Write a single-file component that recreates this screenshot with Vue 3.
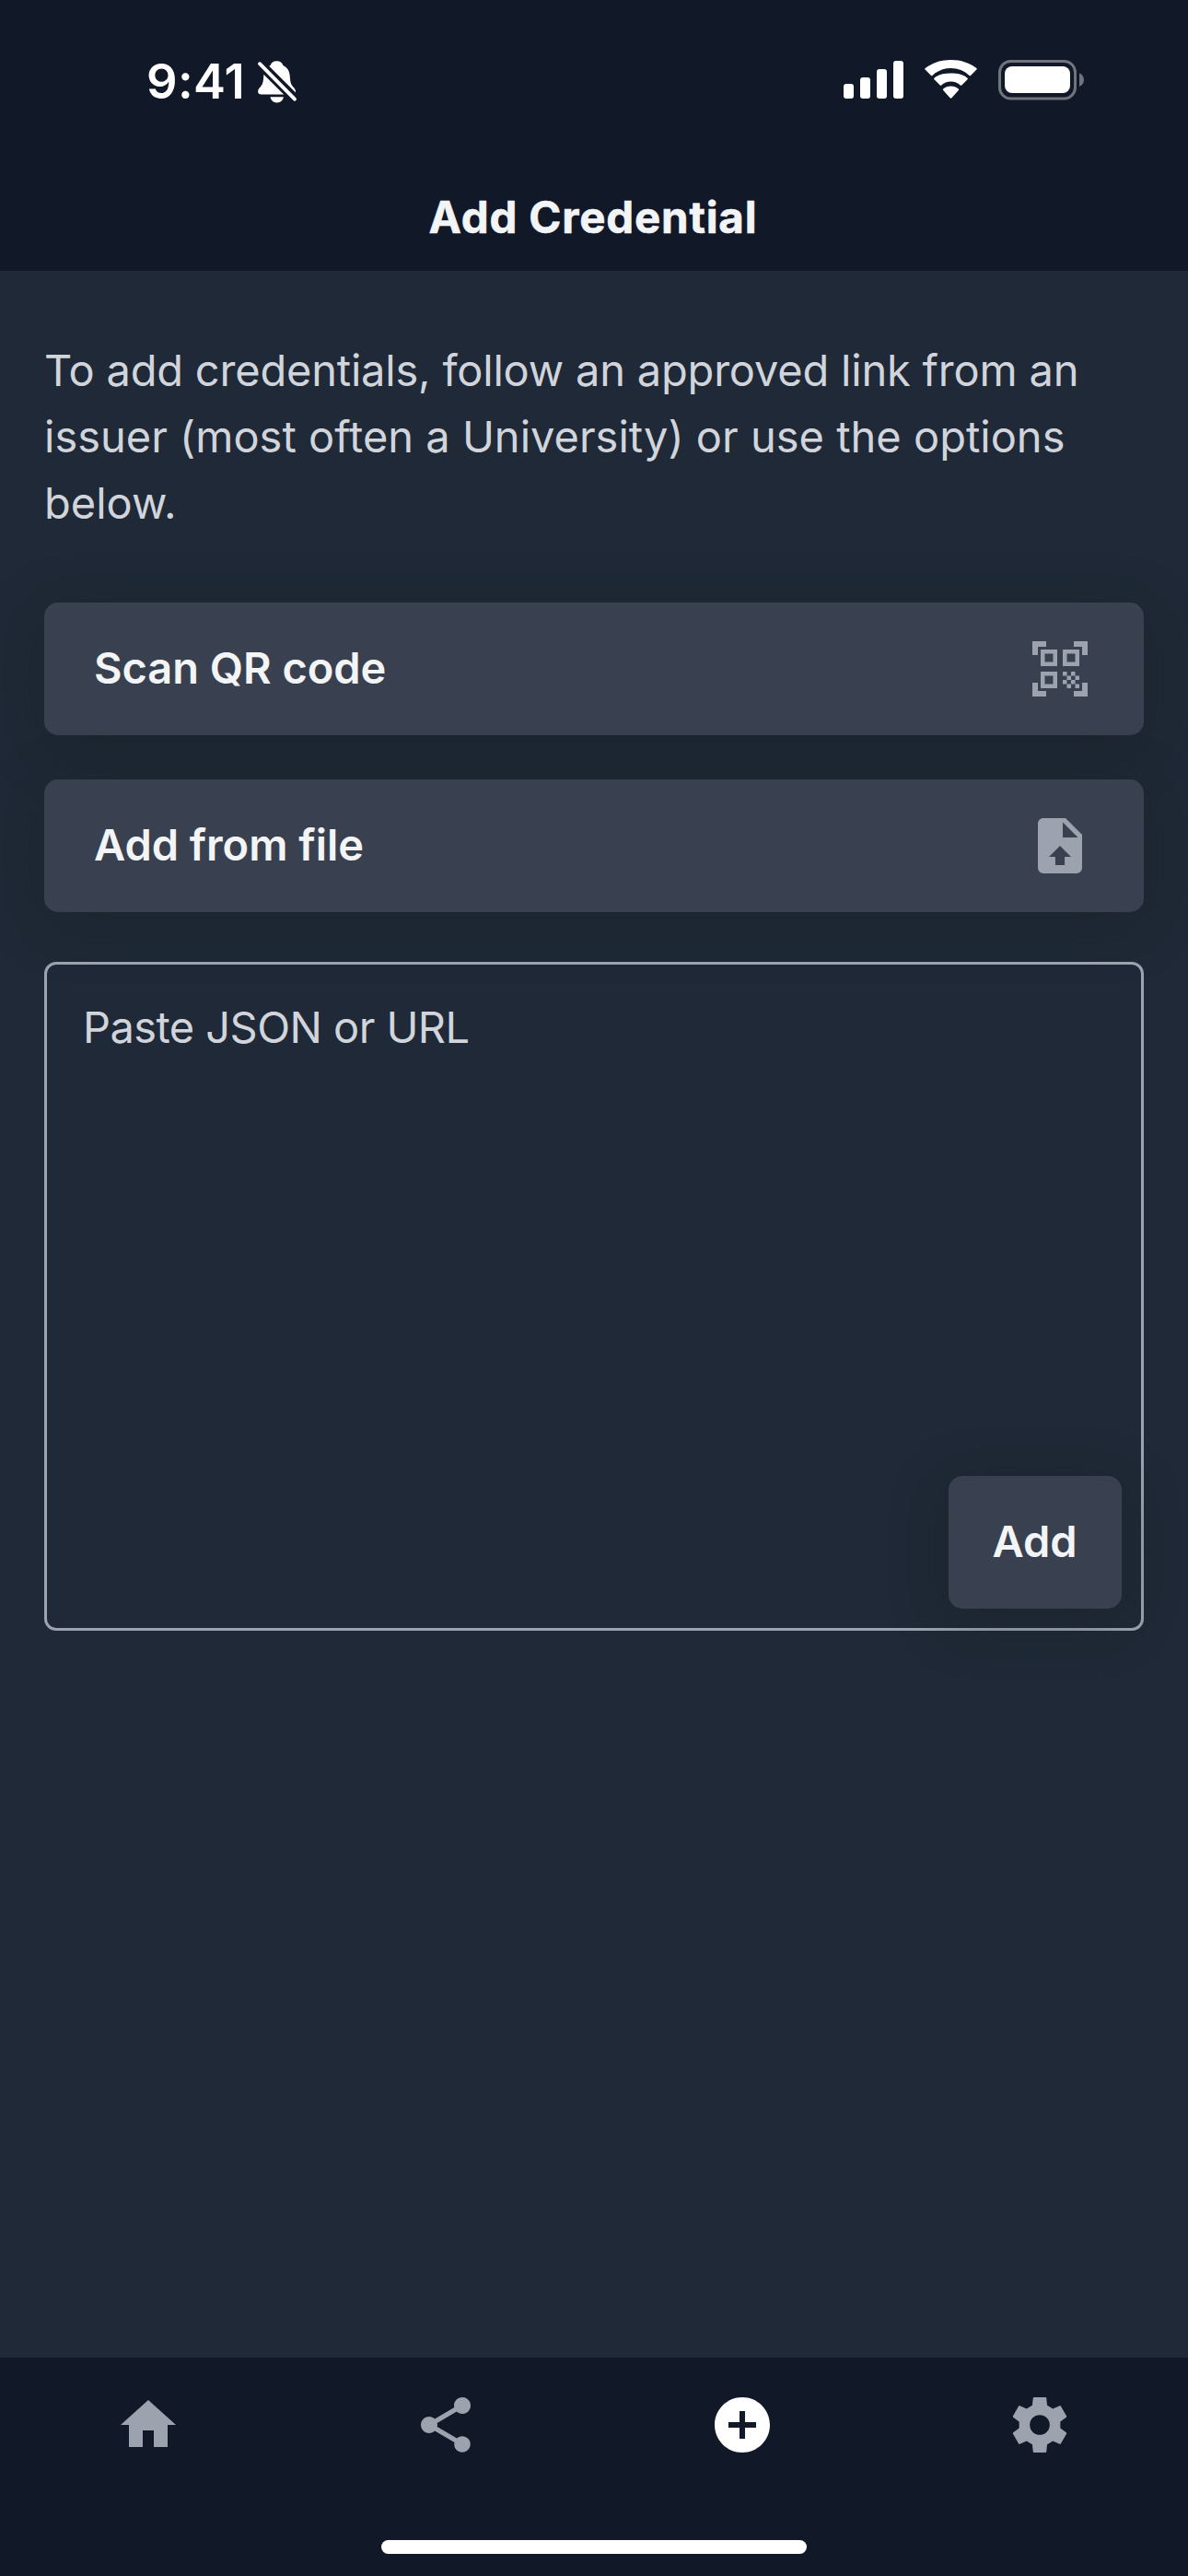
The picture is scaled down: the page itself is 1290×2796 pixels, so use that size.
<script setup>
const options = [
  {
    label: 'Scan QR code',
    icon: 'M9.5 6.5v3h-3v-3h3M11 5H5v6h6V5zm-1.5 9.5v3h-3v-3h3M11 13H5v6h6v-6zm6.5-6.5v3h-3v-3h3M19 5h-6v6h6V5zm-6 8h1.5v1.5H13V13zm1.5 1.5H16V16h-1.5v-1.5zM16 13h1.5v1.5H16V13zm-3 3h1.5v1.5H13V16zm1.5 1.5H16V19h-1.5v-1.5zM16 16h1.5v1.5H16V16zm1.5-1.5H19V16h-1.5v-1.5zm0 3H19V19h-1.5v-1.5zM22 7h-2V4h-3V2h5v5zm0 15v-5h-2v3h-3v2h5zM2 22h5v-2H4v-3H2v5zM2 2v5h2V4h3V2H2z',
  },
  {
    label: 'Add from file',
    icon: 'M14 2H6C4.89 2 4 2.89 4 4V20A2 2 0 0 0 6 22H18A2 2 0 0 0 20 20V8L14 2M13.7 16V19H10.3V16H8L12 12L16 16H13.7M13 9V3.5L18.5 9H13Z',
  },
]

// Gear outline: one tooth repeated every 60 degrees around (12, 12).
const tooth = [[-2.69, -7.05], [-2.42, -9.7], [-2.2, -10], [2.2, -10], [2.42, -9.7], [2.69, -7.05]]
const gearPoints = [0, 1, 2, 3, 4, 5].flatMap((i) => {
  const a = (i * Math.PI) / 3
  return tooth.map(([x, y]) =>
    `${(12 + x * Math.cos(a) - y * Math.sin(a)).toFixed(2)} ${(12 + x * Math.sin(a) + y * Math.cos(a)).toFixed(2)}`)
})
const gear = `M${gearPoints.join('L')}ZM12 8.4a3.6 3.6 0 1 0 0 7.2a3.6 3.6 0 1 0 0-7.2Z`

const tabs = [
  { name: 'Home', icon: 'M10 20v-6h4v6h5v-8h3L12 3 2 12h3v8z' },
  { name: 'Share', icon: 'M18 16.08c-.76 0-1.44.3-1.96.77L8.91 12.7c.05-.23.09-.46.09-.7s-.04-.47-.09-.7l7.05-4.11c.54.5 1.25.81 2.04.81 1.66 0 3-1.34 3-3s-1.34-3-3-3-3 1.34-3 3c0 .24.04.47.09.7L8.04 9.81C7.5 9.31 6.79 9 6 9c-1.66 0-3 1.34-3 3s1.34 3 3 3c.79 0 1.5-.31 2.04-.81l7.12 4.16c-.05.21-.08.43-.08.65 0 1.61 1.31 2.92 2.92 2.92 1.61 0 2.92-1.31 2.92-2.92s-1.31-2.92-2.92-2.92z' },
  { name: 'Add', active: true, icon: 'M12 2C6.48 2 2 6.48 2 12s4.48 10 10 10 10-4.48 10-10S17.52 2 12 2zm5 11h-4v4h-2v-4H7v-2h4V7h2v4h4v2z' },
  { name: 'Settings', icon: gear },
]
</script>

<template>
  <div class="screen">
    <header class="header">
      <div class="status">
        <span class="time">9:41</span>
        <svg class="bell" width="44" height="48" viewBox="0 0 44 48">
          <defs>
            <mask id="bell-cut">
              <rect width="44" height="48" fill="#fff" />
              <path d="M-1 0L44 45" stroke="#000" stroke-width="10.5" />
            </mask>
          </defs>
          <g fill="#fff">
            <g mask="url(#bell-cut)">
              <path d="M21.5 1.2c3.6 0 6 1.9 6.9 4.7C33.2 8.2 35.3 12.2 35.7 17c.4 6 .9 9.5 3.8 12.5 1.7 1.7 2.7 3.5 2.5 5.2-.2 1.8-1.3 2.8-3.4 2.8H4.6c-2.1 0-3.3-1-3.5-2.8-.2-1.7.8-3.5 2.5-5.2C6.5 26.5 7 23 7.3 17c.4-4.8 2.5-8.8 7.3-11.1.9-2.8 3.3-4.7 6.9-4.7z" />
            </g>
            <path d="M14.5 40.2h14.4c-.6 3.5-3.5 6.2-7.2 6.2s-6.6-2.7-7.2-6.2z" />
            <path d="M3 4.2L41 42.6" stroke="#fff" stroke-width="3.9" stroke-linecap="round" />
          </g>
        </svg>
        <svg class="signal" width="66" height="42" viewBox="0 0 66 42" fill="#fff">
          <rect x="0" y="25" width="11" height="16" rx="3" />
          <rect x="18" y="18" width="11" height="23" rx="3" />
          <rect x="36" y="9" width="11" height="32" rx="3" />
          <rect x="54" y="0" width="11" height="41" rx="3" />
        </svg>
        <svg class="wifi" width="58" height="43" viewBox="0 0 58 43" fill="#fff">
          <path d="M28.5 9c7.7 0 14.7 3 20 7.9.5.5 1 .5 1.5 0l6.4-6.3c.5-.5.5-1.1 0-1.6C49.2 3.4 39.4 0 28.5 0S7.8 3.4.6 9c-.5.5-.5 1.1 0 1.6L7 16.9c.5.5 1 .5 1.5 0C13.8 12 20.8 9 28.5 9z" />
          <path d="M28.5 23.5c3.9 0 7.5 1.5 10.2 3.9.5.5 1.1.5 1.6 0l6.2-6.1c.5-.5.5-1.1 0-1.6-4.8-4.2-11.1-5.2-18-5.2s-13.200 1-18 5.200c-.5.500-.5 1.100 0 1.600l6.200 6.100c.5.500 1.100.500 1.600 0 2.700-2.400 6.300-3.900 10.200-3.900z" />
          <path d="M36.8 31.6c.5.5.5 1 0 1.5l-7.4 8.2c-.6.6-1.2.6-1.8 0l-7.4-8.2c-.5-.5-.5-1 0-1.5 2.2-1.9 5-3 8.3-3s6.1 1.1 8.3 3z" />
        </svg>
        <svg class="battery" width="94" height="44" viewBox="0 0 94 44">
          <rect x="1.5" y="1.5" width="82" height="40.5" rx="12" fill="none" stroke="#70747d" stroke-width="3" />
          <rect x="7" y="7" width="71" height="29" rx="8" fill="#fff" />
          <path d="M88 14.5c3 1 5 4 5 7.3s-2 6.2-5 7.2z" fill="#70747d" />
        </svg>
      </div>
      <h1 class="title">Add Credential</h1>
    </header>

    <main class="content">
      <p class="intro">To add credentials, follow an approved link from an issuer (most often a University) or use the options below.</p>
      <div class="options">
        <button v-for="o in options" :key="o.label" class="option">
          <span>{{ o.label }}</span>
          <svg class="icon" viewBox="0 0 24 24"><path :d="o.icon" fill-rule="evenodd" /></svg>
        </button>
      </div>
      <div class="paste">
        <span class="placeholder">Paste JSON or URL</span>
        <button class="add">Add</button>
      </div>
    </main>

    <nav class="tabs">
      <div class="tab-row">
        <div v-for="t in tabs" :key="t.name" class="tab" :class="{ active: t.active }">
          <svg class="icon" viewBox="0 0 24 24"><path :d="t.icon" fill-rule="evenodd" /></svg>
        </div>
      </div>
      <div class="indicator"></div>
    </nav>
  </div>
</template>

<style>
body {
  background: #1f2937;
}
</style>

<style scoped>
.screen {
  display: flex;
  flex-direction: column;
  width: 1290px;
  height: 2796px;
  overflow: hidden;
  background: #1f2937;
  font-family: Inter, "Liberation Sans", sans-serif;
  font-size: 47px;
  color: #f3f4f6;
}
.header {
  height: 294px;
  flex: none;
  background: #111827;
}
.status {
  display: flex;
  align-items: flex-start;
  box-sizing: border-box;
  height: 177px;
  padding: 64px 0 0 159px;
}
.time {
  width: 120px;
  margin-top: -1px;
  font-size: 52.5px;
  line-height: 50px;
  font-weight: 600;
  letter-spacing: 0.3px;
  color: #fff;
}
.bell {
  flex: none;
  margin-top: 1px;
}
.signal {
  margin: 2px 0 0 593px;
  flex: none;
}
.wifi {
  margin: 1px 0 0 22px;
  flex: none;
}
.battery {
  margin: 1px 0 0 22px;
  flex: none;
}
.title {
  margin: 0;
  padding-right: 2px;
  height: 117px;
  line-height: 117px;
  text-align: center;
  font-size: 47.5px;
  font-weight: 700;
  letter-spacing: 0.8px;
  -webkit-text-stroke: 0.6px #f3f4f6;
}
.content {
  flex: 1;
  display: flex;
  flex-direction: column;
  padding: 72px 48px 0;
}
.intro {
  margin: 0;
  line-height: 72px;
  color: #d1d5db;
}
.intro::first-line {
  letter-spacing: -0.2px;
}
.options {
  display: flex;
  flex-direction: column;
  gap: 48px;
  margin-top: 72px;
}
button {
  border: 0;
  font: inherit;
  font-weight: 600;
  letter-spacing: -0.05px;
  color: #f3f4f6;
  background: #394150;
  border-radius: 15px;
  box-shadow: 0 12px 60px rgba(24, 32, 30, 0.35);
}
.option {
  display: flex;
  align-items: center;
  justify-content: space-between;
  height: 144px;
  padding: 0 55px 0 54px;
}
.option span {
  padding-bottom: 4px;
}
.icon {
  width: 72px;
  height: 72px;
  fill: #9ca3af;
}
.paste {
  position: relative;
  box-sizing: border-box;
  height: 726px;
  margin-top: 54px;
  padding: 32px 39px;
  border: 3px solid #9ca3af;
  border-radius: 13px;
}
.placeholder {
  line-height: 72px;
  letter-spacing: -0.57px;
  color: #d1d5db;
}
.add {
  position: absolute;
  right: 21px;
  bottom: 21px;
  width: 188px;
  height: 144px;
  padding: 0 1px 3px 0;
}
.tabs {
  height: 237px;
  flex: none;
  background: #111827;
}
.tab-row {
  display: flex;
  padding-top: 37px;
}
.tab {
  flex: 1;
  display: flex;
  justify-content: center;
}
.active .icon {
  fill: #fff;
}
.indicator {
  width: 462px;
  height: 15px;
  margin: 89px auto 0;
  border-radius: 8px;
  background: #fff;
}
</style>
